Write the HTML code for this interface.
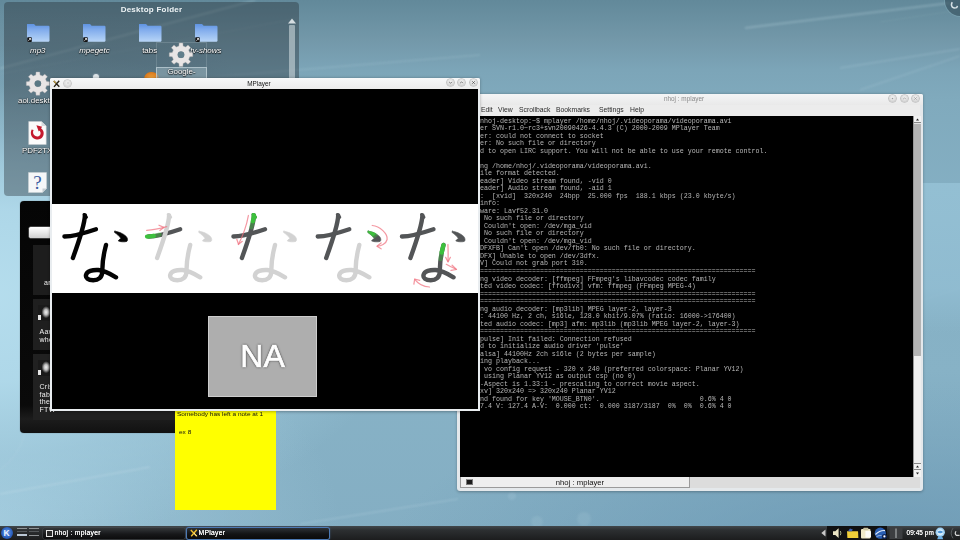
<!DOCTYPE html>
<html>
<head>
<meta charset="utf-8">
<title>KDE Desktop - MPlayer</title>
<style>
*{margin:0;padding:0;box-sizing:border-box;}
html,body{width:960px;height:540px;overflow:hidden;}
body{font-family:"Liberation Sans",sans-serif;position:relative;
 background:
  radial-gradient(ellipse 430px 250px at -20px 295px, rgba(182,222,238,.98) 0%, rgba(178,219,236,.9) 35%, rgba(166,208,226,.5) 65%, rgba(150,192,211,0) 100%),
  radial-gradient(ellipse 360px 210px at -20px 520px, rgba(168,208,226,.85) 0%, rgba(160,201,219,.55) 45%, rgba(150,192,211,0) 100%),
  radial-gradient(ellipse 240px 80px at 0px 85px, rgba(98,136,153,.6) 0%, rgba(100,138,155,0) 100%),
  radial-gradient(ellipse 520px 200px at 900px 570px, rgba(104,150,178,0.85) 0%, rgba(110,155,182,0) 100%),
  linear-gradient(180deg,#62899a 0%,#7398a9 7.4%,#7ca5b8 13%,#80aabd 18.5%,#85b0c4 40%,#87b2c6 70%,#84aec3 100%);
}
.abs{position:absolute;}
/* ---------- desktop folder ---------- */
#folder{left:4px;top:2px;width:295px;height:194px;border-radius:4px;background:rgba(30,37,42,0.36);}
#folder .title{left:0;width:295px;top:3px;text-align:center;color:#eef3f5;font-weight:bold;font-size:8px;letter-spacing:.25px;}
.lbl{color:#fff;font-size:7px;line-height:8px;text-align:center;width:56px;white-space:nowrap;text-shadow:0 0 1.5px #000,0 1px 1px rgba(0,0,0,.8);}
.lbl span{display:inline-block;transform:scaleX(1.13);}
.it{font-style:italic;}
.av{width:13px;height:16px;background:radial-gradient(ellipse 4.5px 6px at 62% 45%,#f2f2f2 0%,#bdbdbd 45%,#555 80%,#1a1a1a 100%),#1a1a1a;box-shadow:inset 2.5px -5px 0 -1px rgba(235,235,235,.0);}
.av:after{content:'';position:absolute;left:0;top:10px;width:2.5px;height:5px;background:#e6e6e6;}
.mbt{color:#f0f0f0;font-size:7px;line-height:7.6px;white-space:nowrap;letter-spacing:.3px;}
/* ---------- windows ---------- */
#mp{left:50px;top:78px;width:430px;height:333px;background:#e9edf0;border-radius:2px 2px 0 0;box-shadow:0 .5px 3px rgba(0,0,0,.3);}
#mp .tb{left:0;top:0;width:430px;height:11px;background:linear-gradient(#f7f8f9,#ececec);border-radius:2px 2px 0 0;}
#mp .vid{left:2px;top:11px;width:426px;height:320px;background:#000;overflow:hidden;}
.wtitle{font-size:6.4px;line-height:7px;color:#151515;text-align:center;white-space:nowrap;}
.btn{width:7px;height:7px;border-radius:50%;background:radial-gradient(circle at 50% 38%,#f4f4f4 0%,#dedede 50%,#bcbcbc 100%);box-shadow:0 0 0 .6px #a9a9a9;}
.btn svg{width:7px;height:7px;}
#term{left:457px;top:93.7px;width:466px;height:397.3px;background:#e4e8eb;border-radius:2px 2px 3px 3px;box-shadow:0 .5px 3px rgba(0,0,0,.28);}
#term .tb{left:0;top:0;width:466px;height:11.3px;background:linear-gradient(#f4f5f6,#e9e9e9);border-radius:2px 2px 0 0;}
#term .menu{left:3px;top:11.3px;width:460px;height:11px;background:#ececec;font-size:6.3px;line-height:8px;color:#2a2a2a;}
#term .menu span{position:absolute;top:1.5px;display:inline-block;transform-origin:0 50%;transform:scaleX(1.08);white-space:nowrap;}
#term .scr{left:3px;top:22.3px;width:453px;height:361px;background:#000;overflow:hidden;}
#term pre{font-family:"Liberation Mono",monospace;font-size:6.667px;line-height:7.52px;color:#b6b6b6;position:absolute;left:0;top:1.7px;white-space:pre;filter:blur(.3px);}
.lbl,.menu,.tl,.wtitle,.mbt,.nt,.title{filter:blur(.25px);}
/* ---------- taskbar ---------- */
#bar{left:0;top:526px;width:960px;height:14px;background:linear-gradient(#41474b 0%,#2c2f31 30%,#1c1d1e 100%);}
.task{top:1.5px;height:11px;border-radius:2px;}
.tl{color:#fff;font-size:6.8px;line-height:8px;white-space:nowrap;letter-spacing:.25px;text-shadow:0 0 .6px #fff;}
</style>
</head>
<body>

<!-- wallpaper streaks -->
<svg class="abs" style="left:0;top:0;filter:blur(.9px)" width="960" height="540" viewBox="0 0 960 540" fill="none">
  <path d="M0,68.5 L256,0" stroke="#cfe6ef" stroke-width="2" opacity=".22"/>
  <path d="M0,74 L300,18" stroke="#cfe6ef" stroke-width=".8" opacity=".14"/>
  <path d="M200,78 L480,55" stroke="#d5eaf2" stroke-width="1.4" opacity=".16"/>
  <path d="M745,28 L950,3" stroke="#cfe6ef" stroke-width="2" opacity=".26"/>
  <path d="M880,22 L960,10" stroke="#cfe6ef" stroke-width=".8" opacity=".12"/>
  <path d="M840,68 L960,49" stroke="#cfe6ef" stroke-width="1.6" opacity=".2"/>
  <path d="M860,90 L960,56" stroke="#cfe6ef" stroke-width="1.6" opacity=".18"/>
  <path d="M0,494 L150,467" stroke="#e2f2f8" stroke-width="1.4" opacity=".22"/>
  <path d="M0,470 Q40,440 20,380" stroke="#e2f2f8" stroke-width="1" opacity=".14"/>
  <path d="M923,300 L960,288" stroke="#cfe6ef" stroke-width="1" opacity=".15"/>
  <path d="M300,524 L458,499" stroke="#d8ecf4" stroke-width="1.6" opacity=".2"/>
  <circle cx="537" cy="522" r="6" fill="#cfe6ef" opacity=".12"/><circle cx="512" cy="496" r="4" fill="#cfe6ef" opacity=".14"/>
  <circle cx="584" cy="519" r="7" fill="#cfe6ef" opacity=".12"/>
  <circle cx="606" cy="443" r="5" fill="#cfe6ef" opacity=".10"/>
</svg>
<div class="abs" style="left:915px;top:183px;width:45px;height:150px;background:linear-gradient(180deg,rgba(150,194,214,.85) 0%,rgba(146,190,211,.8) 70%,rgba(140,184,206,0) 100%);"></div>
<!-- cashew -->
<div class="abs" style="left:944.5px;top:-15.5px;width:31px;height:31px;border-radius:50%;background:rgba(50,76,90,.6);box-shadow:0 0 0 1px rgba(140,185,198,.35);"></div>
<svg class="abs" style="left:948px;top:1px" width="12" height="10" viewBox="0 0 12 10"><path d="M4.2,1.2 Q2.6,4.2 4.4,6.2 Q6.2,7.6 8.6,6.6 L9.6,5" stroke="#e4eef2" stroke-width="1.5" fill="none" opacity=".9"/></svg>

<!-- Desktop folder plasmoid -->
<div id="folder" class="abs">
  <div class="title abs">Desktop Folder</div>
  <div class="abs" style="left:22.5px;top:21.9px;width:23px;height:17.8px;background:linear-gradient(180deg,#5f93e2 0%,#7fabec 30%,#b9d6f7 100%);clip-path:polygon(0 .8px,.8px 0,7.2px 0,8.4px .8px,9px 1.9px,22.2px 1.9px,23px 2.7px,23px 17px,22.2px 17.8px,.8px 17.8px,0 17px);"></div><svg class="abs" style="left:21.5px;top:21.5px" width="25" height="19" viewBox="0 0 25 19"><rect x="1.2" y="13.2" width="4.6" height="4.8" rx=".8" fill="#111"/><path d="M2.3,16.8 L4.6,14.6 M3.1,14.5 L4.7,14.5 L4.7,16.1" stroke="#fff" stroke-width=".8" fill="none"/></svg>
  <div class="lbl abs it" style="left:6px;top:45.1px;"><span>mp3</span></div>
  <div class="abs" style="left:78.5px;top:21.9px;width:23px;height:17.8px;background:linear-gradient(180deg,#5f93e2 0%,#7fabec 30%,#b9d6f7 100%);clip-path:polygon(0 .8px,.8px 0,7.2px 0,8.4px .8px,9px 1.9px,22.2px 1.9px,23px 2.7px,23px 17px,22.2px 17.8px,.8px 17.8px,0 17px);"></div><svg class="abs" style="left:77.5px;top:21.5px" width="25" height="19" viewBox="0 0 25 19"><rect x="1.2" y="13.2" width="4.6" height="4.8" rx=".8" fill="#111"/><path d="M2.3,16.8 L4.6,14.6 M3.1,14.5 L4.7,14.5 L4.7,16.1" stroke="#fff" stroke-width=".8" fill="none"/></svg>
  <div class="lbl abs it" style="left:62px;top:45.1px;"><span>mpegetc</span></div>
  <div class="abs" style="left:134.5px;top:21.9px;width:23px;height:17.8px;background:linear-gradient(180deg,#5f93e2 0%,#7fabec 30%,#b9d6f7 100%);clip-path:polygon(0 .8px,.8px 0,7.2px 0,8.4px .8px,9px 1.9px,22.2px 1.9px,23px 2.7px,23px 17px,22.2px 17.8px,.8px 17.8px,0 17px);"></div>
  <div class="lbl abs" style="left:118px;top:45.1px;"><span>tabs</span></div>
  <div class="abs" style="left:190.5px;top:21.9px;width:23px;height:17.8px;background:linear-gradient(180deg,#5f93e2 0%,#7fabec 30%,#b9d6f7 100%);clip-path:polygon(0 .8px,.8px 0,7.2px 0,8.4px .8px,9px 1.9px,22.2px 1.9px,23px 2.7px,23px 17px,22.2px 17.8px,.8px 17.8px,0 17px);"></div><svg class="abs" style="left:189.5px;top:21.5px" width="25" height="19" viewBox="0 0 25 19"><rect x="1.2" y="13.2" width="4.6" height="4.8" rx=".8" fill="#111"/><path d="M2.3,16.8 L4.6,14.6 M3.1,14.5 L4.7,14.5 L4.7,16.1" stroke="#fff" stroke-width=".8" fill="none"/></svg>
  <div class="lbl abs it" style="left:174px;top:45.1px;"><span>tv-shows</span></div>
  <div class="abs" style="left:89px;top:71.5px;width:6px;height:6px;border-radius:50%;background:#dfe6ea;box-shadow:0 0 0 1px #6c8290;"></div>
  <div class="abs" style="left:139.5px;top:70px;width:15px;height:10px;border-radius:7px 7px 0 0;background:radial-gradient(circle at 50% 80%,#f7b24a,#d9791c 70%,#9b4e12);"></div>
  <svg class="abs" style="left:0;top:0" width="295" height="194" viewBox="4 2 295 194"><path d="M35.82,74.95 L36.07,72.04 L39.73,72.04 L39.98,74.95 L42.55,76.01 L44.78,74.13 L47.37,76.72 L45.49,78.95 L46.55,81.52 L49.46,81.77 L49.46,85.43 L46.55,85.68 L45.49,88.25 L47.37,90.48 L44.78,93.07 L42.55,91.19 L39.98,92.25 L39.73,95.16 L36.07,95.16 L35.82,92.25 L33.25,91.19 L31.02,93.07 L28.43,90.48 L30.31,88.25 L29.25,85.68 L26.34,85.43 L26.34,81.77 L29.25,81.52 L30.31,78.95 L28.43,76.72 L31.02,74.13 L33.25,76.01Z M34.70,83.60 a3.20,3.20 0 1,0 6.40,0 a3.20,3.20 0 1,0 -6.40,0Z" fill="#e8e5e5" fill-rule="evenodd" stroke="#b9b4b5" stroke-width=".4"/><circle cx="37.9" cy="83.6" r="3.2" fill="#5a7884"/></svg>
  <div class="lbl abs" style="left:13.5px;top:94.5px;text-align:left;width:40px;overflow:hidden"><span style="transform-origin:0 50%">aoi.desktop</span></div>
  <svg class="abs" style="left:24.3px;top:119px" width="19" height="24" viewBox="0 0 19 24"><path d="M.7,.5 L13.5,.5 L18.2,5 L18.2,23.5 L.7,23.5Z" fill="#fbfbfb" stroke="#c9cdd0" stroke-width=".5"/><path d="M13.5,.5 L13.5,5 L18.2,5Z" fill="#d5d9dc"/><g transform="translate(9.3,12.2) scale(1.32) translate(-9.5,-12)"><path d="M5.2,9.2 C3.6,12.5 5.4,16.3 9,16.8 C12.8,17.3 15.3,13.8 14,10.4 C13.4,8.9 12.3,8 11.2,7.6 L10.4,9.6 C12.2,10.5 12.4,12.4 11.5,13.5 C10.3,15 8.1,14.7 7.1,13.4 C6.2,12.2 6,10.8 6.7,9.5Z" fill="#c41a2e"/><path d="M8.8,5.9 L13.2,7.2 L10.6,10.8Z" fill="#c41a2e"/></g></svg>
  <div class="lbl abs" style="left:18.3px;top:145.3px;text-align:left;width:40px;overflow:hidden"><span style="transform-origin:0 50%">PDF2TXT.d</span></div>
  <svg class="abs" style="left:24.3px;top:170px" width="19" height="21" viewBox="0 0 19 21"><path d="M.5,.5 L18.5,.5 L18.5,16.5 L14.5,20.5 L.5,20.5Z" fill="#f6f7f8" stroke="#cdd3d6" stroke-width=".5"/><path d="M18.5,16.5 L14.5,16.5 L14.5,20.5Z" fill="#c5cdd2"/><text x="9.4" y="17.2" font-family="Liberation Serif" font-size="19" fill="#3b5ba0" text-anchor="middle">?</text></svg>
  <div class="abs" style="left:285px;top:23px;width:6px;height:171px;background:rgba(215,225,230,.55);border-radius:1px;"></div>
  <svg class="abs" style="left:284px;top:16px" width="8" height="6"><path d="M0,5.5 L4,0.5 L8,5.5Z" fill="#d5dde1"/></svg>
  <div class="abs" style="left:152px;top:39.5px;width:51px;height:37px;border:.6px solid rgba(200,215,222,.2);"></div>
  <div class="abs" style="left:152px;top:64.5px;width:51px;height:12px;background:rgba(150,175,186,.55);border:.6px solid rgba(205,220,226,.6);"></div>
  <svg class="abs" style="left:0;top:0" width="295" height="194" viewBox="4 2 295 194"><path d="M178.90,45.95 L179.14,42.95 L182.86,42.95 L183.10,45.95 L185.70,47.03 L187.99,45.07 L190.63,47.71 L188.67,50.00 L189.75,52.60 L192.75,52.84 L192.75,56.56 L189.75,56.80 L188.67,59.40 L190.63,61.69 L187.99,64.33 L185.70,62.37 L183.10,63.45 L182.86,66.45 L179.14,66.45 L178.90,63.45 L176.30,62.37 L174.01,64.33 L171.37,61.69 L173.33,59.40 L172.25,56.80 L169.25,56.56 L169.25,52.84 L172.25,52.60 L173.33,50.00 L171.37,47.71 L174.01,45.07 L176.30,47.03Z M177.80,54.70 a3.20,3.20 0 1,0 6.40,0 a3.20,3.20 0 1,0 -6.40,0Z" fill="#e8e5e5" fill-rule="evenodd" stroke="#aaa6a7" stroke-width=".4"/><circle cx="181" cy="54.7" r="3.3" fill="#607e8b"/></svg>
  <div class="lbl abs" style="left:149.5px;top:65.5px;"><span>Google-</span></div>
</div>

<!-- dark microblog widget -->
<div id="mb" class="abs" style="left:20px;top:201px;width:200px;height:232px;background:linear-gradient(#050505 0%,#0a0a0a 88%,#1c1c1c 94%,#111 100%);border-radius:4px;box-shadow:0 0 1px rgba(0,0,0,.6);">
  <div class="abs" style="left:9px;top:26px;width:180px;height:11px;border-radius:1.5px;background:linear-gradient(#ffffff,#e9e9e9 50%,#cfcfcf);box-shadow:0 0 0 .5px #777;"></div>
  <div class="abs" style="left:12.5px;top:44px;width:176px;height:50px;background:#1d1d1d;"></div>
  <div class="abs" style="left:12.5px;top:98px;width:176px;height:51px;background:#1f1f1f;"></div>
  <div class="abs" style="left:12.5px;top:153px;width:176px;height:66px;background:#212121;"></div>
  <div class="abs av" style="left:18px;top:104px;"></div>
  <div class="abs av" style="left:18px;top:159px;"></div>
  <div class="abs mbt" style="left:24px;top:78px;">ar</div>
  <div class="abs mbt" style="left:19.5px;top:127px;">Aaw<br>whe</div>
  <div class="abs mbt" style="left:19.5px;top:182px;">Cris<br>fab<br>the<br>FTW</div>
</div>

<!-- sticky note -->
<div id="note" class="abs" style="left:175.3px;top:405px;width:101px;height:105px;background:#ffff00;">
  <div class="abs nt" style="left:1.5px;top:4.5px;font-size:6px;line-height:8px;color:#111;white-space:nowrap;"><span style="display:inline-block;transform-origin:0 50%;transform:scaleX(1.08)">Somebody has left a note at 1</span></div>
  <div class="abs nt" style="left:3.5px;top:22.5px;font-size:6px;line-height:8px;color:#111;white-space:nowrap;"><span style="display:inline-block;transform-origin:0 50%;transform:scaleX(1.08)">ex 8</span></div>
</div>

<!-- terminal window -->
<div id="term" class="abs">
  <div class="tb abs">
    <div class="wtitle abs" style="left:187px;top:1.8px;width:80px;color:#8a8a8a;">nhoj : mplayer</div>
    <div class="btn abs" style="left:432.1px;top:1.8px;"><svg class="abs" style="left:0;top:0" viewBox="0 0 9 9"><circle cx="4.5" cy="4.5" r="1" fill="#999"/></svg></div>
    <div class="btn abs" style="left:443.7px;top:1.8px;"><svg class="abs" style="left:0;top:0" viewBox="0 0 9 9"><path d="M2.8 5.3 L4.5 3.6 L6.2 5.3" stroke="#999" stroke-width="1" fill="none"/></svg></div>
    <div class="btn abs" style="left:455.4px;top:1.8px;"><svg class="abs" style="left:0;top:0" viewBox="0 0 9 9"><path d="M3 3 L6 6 M6 3 L3 6" stroke="#999" stroke-width="1" fill="none"/></svg></div>
  </div>
  <div class="menu abs">
    <span style="left:4px">File</span><span style="left:20.6px">Edit</span><span style="left:37.6px">View</span><span style="left:58.5px">Scrollback</span><span style="left:96.4px">Bookmarks</span><span style="left:138.6px">Settings</span><span style="left:170.4px">Help</span>
  </div>
  <div class="sb abs" style="left:456px;top:22.3px;width:7px;height:361px;background:#e4e4e4;border-left:.5px solid #999;">
    <div class="abs" style="left:0;top:0;width:7px;height:7px;background:#f2f2f2;border-bottom:.5px solid #888;"></div>
    <svg class="abs" style="left:0;top:0" width="7" height="7"><path d="M2 4.5 L3.5 2.5 L5 4.5Z" fill="#222"/></svg>
    <div class="abs" style="left:0;top:8px;width:7px;height:232px;background:#b4b4b4;"></div>
    <div class="abs" style="left:0;top:240px;width:7px;height:107px;background:#efefef;"></div>
    <div class="abs" style="left:0;top:347px;width:7px;height:7px;background:#f2f2f2;border-top:.5px solid #888;border-bottom:.5px solid #888;"></div>
    <svg class="abs" style="left:0;top:347px" width="7" height="7"><path d="M2 4.5 L3.5 2.5 L5 4.5Z" fill="#222"/></svg>
    <div class="abs" style="left:0;top:354px;width:7px;height:7px;background:#f2f2f2;"></div>
    <svg class="abs" style="left:0;top:354px" width="7" height="7"><path d="M2 2.5 L3.5 4.5 L5 2.5Z" fill="#222"/></svg>
  </div>
  <div class="tabs abs" style="left:3px;top:383.8px;width:460px;height:11px;background:#dcdcdc;">
    <div class="abs" style="left:0;top:0;width:230px;height:11px;background:#eeeeee;border:.5px solid #9a9a9a;border-top:none;"></div>
    <div class="abs" style="left:5.6px;top:1.8px;width:7.5px;height:6px;background:#1c1c1c;border:.7px solid #777;border-top:1.4px solid #9a9a9a;"></div>
    <div class="abs" style="left:0;top:2px;width:240px;text-align:center;font-size:7px;line-height:8px;color:#111;"><span style="display:inline-block;transform:scaleX(1.1)">nhoj : mplayer</span></div>
  </div>
  <div class="scr abs"><pre id="tt">nhoj@nhoj-desktop:~$ mplayer /home/nhoj/.videoporama/videoporama.avi
MPlayer SVN-r1.0~rc3+svn20090426-4.4.3 (C) 2000-2009 MPlayer Team
mplayer: could not connect to socket
mplayer: No such file or directory
Failed to open LIRC support. You will not be able to use your remote control.

Playing /home/nhoj/.videoporama/videoporama.avi.
AVI file format detected.
[aviheader] Video stream found, -vid 0
[aviheader] Audio stream found, -aid 1
VIDEO:  [xvid]  320x240  24bpp  25.000 fps  188.1 kbps (23.0 kbyte/s)
Clip info:
 Software: Lavf52.31.0
open: No such file or directory
[MGA] Couldn't open: /dev/mga_vid
open: No such file or directory
[MGA] Couldn't open: /dev/mga_vid
[VO_TDFXFB] Can't open /dev/fb0: No such file or directory.
[VO_3DFX] Unable to open /dev/3dfx.
[VO_XV] Could not grab port 310.
==========================================================================
Opening video decoder: [ffmpeg] FFmpeg's libavcodec codec family
Selected video codec: [ffodivx] vfm: ffmpeg (FFmpeg MPEG-4)
==========================================================================
==========================================================================
Opening audio decoder: [mp3lib] MPEG layer-2, layer-3
AUDIO: 44100 Hz, 2 ch, s16le, 128.0 kbit/9.07% (ratio: 16000-&gt;176400)
Selected audio codec: [mp3] afm: mp3lib (mp3lib MPEG layer-2, layer-3)
==========================================================================
AO: [pulse] Init failed: Connection refused
Failed to initialize audio driver 'pulse'
AO: [alsa] 44100Hz 2ch s16le (2 bytes per sample)
Starting playback...
VDec: vo config request - 320 x 240 (preferred colorspace: Planar YV12)
VDec: using Planar YV12 as output csp (no 0)
Movie-Aspect is 1.33:1 - prescaling to correct movie aspect.
VO: [xv] 320x240 =&gt; 320x240 Planar YV12
No bind found for key 'MOUSE_BTN0'.                         0.6% 4 0
A: 127.4 V: 127.4 A-V:  0.000 ct:  0.000 3187/3187  0%  0%  0.6% 4 0</pre></div>
</div>

<!-- MPlayer window -->
<div id="mp" class="abs">
  <div class="tb abs">
    <svg class="abs" style="left:2.5px;top:1.8px" width="8" height="8" viewBox="0 0 8 8"><path d="M.8,.9 L6.3,6.8 M6.2,.8 L1,6.9" stroke="#2a2418" stroke-width="1.4" fill="none"/><path d="M.8,.9 L3,3.3" stroke="#c8a040" stroke-width="1.2" fill="none"/></svg>
    <div class="btn abs" style="left:14.2px;top:1.8px;width:7px;height:7px;opacity:.9"><div class="abs" style="left:2.5px;top:2.5px;width:2px;height:2px;border-radius:50%;background:#cfcfcf"></div></div>
    <div class="wtitle abs" style="left:169px;top:2px;width:80px;">MPlayer</div>
    <div class="btn abs" style="left:396.9px;top:1.3px;"><svg class="abs" style="left:0;top:0" viewBox="0 0 9 9"><path d="M2.8 3.8 L4.5 5.5 L6.2 3.8" stroke="#6a6a6a" stroke-width="1.2" fill="none"/></svg></div>
    <div class="btn abs" style="left:408.2px;top:1.3px;"><svg class="abs" style="left:0;top:0" viewBox="0 0 9 9"><path d="M2.8 5.3 L4.5 3.6 L6.2 5.3" stroke="#6a6a6a" stroke-width="1.2" fill="none"/></svg></div>
    <div class="btn abs" style="left:419.5px;top:1.3px;"><svg class="abs" style="left:0;top:0" viewBox="0 0 9 9"><path d="M3 3 L6 6 M6 3 L3 6" stroke="#555" stroke-width="1.2" fill="none"/></svg></div>
  </div>
  <div class="vid abs">
    <div class="abs" style="left:0;top:115.2px;width:426px;height:89.1px;background:#fff;"></div>
    <svg class="abs" style="left:0;top:0;filter:blur(.4px)" width="426" height="320" viewBox="0 0 426 320" fill="none" stroke-linecap="round" stroke-linejoin="round"><g transform="translate(0.0,115)"><path d="M12.4,32.5 C20,32.4 34,28.6 44,25.2" stroke="#030303" stroke-width="4.3"/><path d="M32.9,11.4 C32.8,19 25.6,41 20.9,54" stroke="#030303" stroke-width="4.4"/><path d="M32.2,10.6 L34.3,13.2" stroke="#030303" stroke-width="3.2"/><path d="M62.9,27.2 C66,27.4 71.5,29.6 74.2,32.4 C75.9,34.3 75.9,36.6 74.8,37.4 C72.5,38.2 68.5,37.9 66.3,37.0 C66.6,35.9 67.8,35.2 68.9,34.6 C67.6,32.4 65,30.2 62.7,28.6 C62.2,28 62.4,27.4 62.9,27.2Z" fill="#030303" stroke="#030303" stroke-width=".6"/><path d="M54,41 C51.6,50 50.2,60 50.3,67.2 C50.4,73.6 46.2,76.2 41.2,76.2 C36,76.2 33.4,74 34,71 C34.8,67.2 40.6,65.6 46.4,66 C53,66.6 58.6,70 64,73.3" stroke="#030303" stroke-width="4.4"/></g><g transform="translate(84.2,115)"><path d="M12.4,32.5 C20,32.4 34,28.6 44,25.2" stroke="#535557" stroke-width="4.3"/><path d="M32.9,11.4 C32.8,19 25.6,41 20.9,54" stroke="#d2d2d2" stroke-width="4.4"/><path d="M32.2,10.6 L34.3,13.2" stroke="#d2d2d2" stroke-width="3.2"/><path d="M62.9,27.2 C66,27.4 71.5,29.6 74.2,32.4 C75.9,34.3 75.9,36.6 74.8,37.4 C72.5,38.2 68.5,37.9 66.3,37.0 C66.6,35.9 67.8,35.2 68.9,34.6 C67.6,32.4 65,30.2 62.7,28.6 C62.2,28 62.4,27.4 62.9,27.2Z" fill="#d2d2d2" stroke="#d2d2d2" stroke-width=".6"/><path d="M54,41 C51.6,50 50.2,60 50.3,67.2 C50.4,73.6 46.2,76.2 41.2,76.2 C36,76.2 33.4,74 34,71 C34.8,67.2 40.6,65.6 46.4,66 C53,66.6 58.6,70 64,73.3" stroke="#d2d2d2" stroke-width="4.4"/><path d="M10.8,32.6 C13,32.6 15.2,32.4 17.6,31.9" stroke="#3dc03d" stroke-width="4.3"/><path d="M17,32 C19,31.7 21,31.2 23.4,30.6" stroke="#3dc03d" stroke-width="4.3" opacity=".45"/><path d="M10.5,26.4 C16,26 24,24.4 30.5,22.6" stroke="#f0707e" stroke-width="1.25" opacity=".72"/><path d="M22.8,21.2 L27.6,23.4 L23.6,26.4" stroke="#f0707e" stroke-width="1.25" opacity=".72"/></g><g transform="translate(169.0,115)"><path d="M12.4,32.5 C20,32.4 34,28.6 44,25.2" stroke="#535557" stroke-width="4.3"/><path d="M32.9,11.4 C32.8,19 25.6,41 20.9,54" stroke="#535557" stroke-width="4.4"/><path d="M32.2,10.6 L34.3,13.2" stroke="#535557" stroke-width="3.2"/><path d="M62.9,27.2 C66,27.4 71.5,29.6 74.2,32.4 C75.9,34.3 75.9,36.6 74.8,37.4 C72.5,38.2 68.5,37.9 66.3,37.0 C66.6,35.9 67.8,35.2 68.9,34.6 C67.6,32.4 65,30.2 62.7,28.6 C62.2,28 62.4,27.4 62.9,27.2Z" fill="#d2d2d2" stroke="#d2d2d2" stroke-width=".6"/><path d="M54,41 C51.6,50 50.2,60 50.3,67.2 C50.4,73.6 46.2,76.2 41.2,76.2 C36,76.2 33.4,74 34,71 C34.8,67.2 40.6,65.6 46.4,66 C53,66.6 58.6,70 64,73.3" stroke="#d2d2d2" stroke-width="4.4"/><path d="M32.9,11.4 C32.8,13.2 32.4,15.2 31.9,17.2" stroke="#3dc03d" stroke-width="4.4"/><path d="M32.2,10.6 L34.3,13.2" stroke="#3dc03d" stroke-width="3.2"/><path d="M31.9,17.2 C31.4,19.2 30.9,21.2 30.3,23.2" stroke="#3dc03d" stroke-width="4.4" opacity=".4"/><path d="M27.4,11.5 C25.7,21 21.2,33 17.4,40.5" stroke="#f0707e" stroke-width="1.25" opacity=".72"/><path d="M15.8,35.3 L17.5,40.2 L21.3,37.3" stroke="#f0707e" stroke-width="1.25" opacity=".72"/></g><g transform="translate(253.3,115)"><path d="M12.4,32.5 C20,32.4 34,28.6 44,25.2" stroke="#535557" stroke-width="4.3"/><path d="M32.9,11.4 C32.8,19 25.6,41 20.9,54" stroke="#535557" stroke-width="4.4"/><path d="M32.2,10.6 L34.3,13.2" stroke="#535557" stroke-width="3.2"/><path d="M62.9,27.2 C66,27.4 71.5,29.6 74.2,32.4 C75.9,34.3 75.9,36.6 74.8,37.4 C72.5,38.2 68.5,37.9 66.3,37.0 C66.6,35.9 67.8,35.2 68.9,34.6 C67.6,32.4 65,30.2 62.7,28.6 C62.2,28 62.4,27.4 62.9,27.2Z" fill="#535557" stroke="#535557" stroke-width=".6"/><path d="M54,41 C51.6,50 50.2,60 50.3,67.2 C50.4,73.6 46.2,76.2 41.2,76.2 C36,76.2 33.4,74 34,71 C34.8,67.2 40.6,65.6 46.4,66 C53,66.6 58.6,70 64,73.3" stroke="#d2d2d2" stroke-width="4.4"/><path d="M62.9,27.2 C65.2,27.3 68.4,28.3 70.8,29.7 L67.6,32.4 C66.2,31.1 64.4,29.8 62.7,28.6 C62.2,28 62.4,27.4 62.9,27.2Z" fill="#3dc03d" stroke="#3dc03d" stroke-width=".6"/><path d="M70.8,29.7 L73,31.3 L69,34.4 L67.6,32.4Z" fill="#3dc03d" opacity=".4"/><path d="M67,21.5 C74.5,22 82.8,30 81.8,35.5 C80.8,40 75.3,42.2 72.2,42.2" stroke="#f0707e" stroke-width="1.25" opacity=".72"/><path d="M75.8,39 L71.6,42.2 L75.8,44.8" stroke="#f0707e" stroke-width="1.25" opacity=".72"/></g><g transform="translate(337.5,115)"><path d="M12.4,32.5 C20,32.4 34,28.6 44,25.2" stroke="#535557" stroke-width="4.3"/><path d="M32.9,11.4 C32.8,19 25.6,41 20.9,54" stroke="#535557" stroke-width="4.4"/><path d="M32.2,10.6 L34.3,13.2" stroke="#535557" stroke-width="3.2"/><path d="M62.9,27.2 C66,27.4 71.5,29.6 74.2,32.4 C75.9,34.3 75.9,36.6 74.8,37.4 C72.5,38.2 68.5,37.9 66.3,37.0 C66.6,35.9 67.8,35.2 68.9,34.6 C67.6,32.4 65,30.2 62.7,28.6 C62.2,28 62.4,27.4 62.9,27.2Z" fill="#535557" stroke="#535557" stroke-width=".6"/><path d="M54,41 C51.6,50 50.2,60 50.3,67.2 C50.4,73.6 46.2,76.2 41.2,76.2 C36,76.2 33.4,74 34,71 C34.8,67.2 40.6,65.6 46.4,66 C53,66.6 58.6,70 64,73.3" stroke="#535557" stroke-width="4.4"/><path d="M54,41 C53.3,43.6 52.7,46 52.2,48.5" stroke="#3dc03d" stroke-width="4.4"/><path d="M52.2,48.5 C51.7,51 51.3,53 51,55" stroke="#3dc03d" stroke-width="4.4" opacity=".4"/><path d="M58.4,40.5 C58.7,46 58.7,52 58.5,57.5" stroke="#f0707e" stroke-width="1.25" opacity=".72"/><path d="M56.1,53.3 L58.5,57.9 L60.9,53.3" stroke="#f0707e" stroke-width="1.25" opacity=".72"/><path d="M56.8,60.3 C60.2,62.3 63.2,63.8 66.6,65.3" stroke="#f0707e" stroke-width="1.25" opacity=".72"/><path d="M62.6,61.2 L67,65.5 L61.5,66.4" stroke="#f0707e" stroke-width="1.25" opacity=".72"/><path d="M40,83 C34,82.5 28.5,79.5 25.5,75.5" stroke="#f0707e" stroke-width="1.25" opacity=".72"/><path d="M24.4,80.2 L25.2,75 L30.2,76.4" stroke="#f0707e" stroke-width="1.25" opacity=".72"/></g></svg>
    <div class="abs" style="left:155.6px;top:227px;width:109.1px;height:81.3px;background:#aeaeae;border:1.6px solid #cdcdcd;"></div>
    <div class="abs" style="left:156px;top:247px;width:109px;height:40px;text-align:center;font-size:32px;line-height:40px;color:#fff;-webkit-text-stroke:.7px #fff;text-shadow:0 0 1.5px #333,0 0 1.5px #444,0 0 2.5px #555;letter-spacing:0px;filter:blur(.35px);">NA</div>
  </div>
</div>

<!-- taskbar -->
<div id="bar" class="abs">
  <!-- kickoff -->
  <div class="abs" style="left:1px;top:1px;width:12px;height:12px;border-radius:50%;background:radial-gradient(circle at 50% 45%,#6aa0ea 0%,#2d62c0 55%,#173a86 100%);"></div>
  <div class="abs" style="left:3.5px;top:2.5px;font-size:8.5px;line-height:9px;font-weight:bold;color:#e9f1ff;">K</div>
  <!-- pager -->
  <div class="abs" style="left:17px;top:1.5px;width:10px;height:1px;background:#8d9194;"></div>
  <div class="abs" style="left:29px;top:1.5px;width:10px;height:1px;background:#8d9194;"></div>
  <div class="abs" style="left:17px;top:4.5px;width:10px;height:1px;background:#54585b;"></div>
  <div class="abs" style="left:29px;top:4.5px;width:10px;height:1px;background:#54585b;"></div>
  <div class="abs" style="left:17px;top:8px;width:10px;height:2px;background:#b9c6d4;"></div>
  <div class="abs" style="left:29px;top:8.5px;width:10px;height:1.3px;background:#8d9194;"></div>
  <!-- tasks -->
  <div class="task abs" style="left:43px;width:142px;background:linear-gradient(#34373a,#17181a 55%,#0c0c0d);box-shadow:0 0 0 .5px #4a4e52;"></div>
  <div class="abs" style="left:46px;top:3.5px;width:7px;height:7px;border:1px solid #e6e6e6;background:#2b2b2b;"></div>
  <div class="abs tl" style="left:54.5px;top:3px;">nhoj : mplayer</div>
  <div class="task abs" style="left:187px;width:142px;background:linear-gradient(#2d3136,#121315 55%,#0a0a0b);box-shadow:0 0 0 1px #4c79b4, 0 0 2px 1px rgba(90,140,210,.5);"></div>
  <svg class="abs" style="left:190px;top:3px" width="8" height="8" viewBox="0 0 8 8"><path d="M.8,1 L6.8,7.2 M6.8,.8 L1.2,7.2" stroke="#f0c030" stroke-width="1.4" fill="none"/><path d="M4,4 L6.8,7.2" stroke="#fff8d0" stroke-width=".7"/></svg>
  <div class="abs tl" style="left:198.5px;top:3px;">MPlayer</div>
  <!-- tray -->
  <svg class="abs" style="left:818px;top:0" width="142" height="14" viewBox="818 0 142 14">
    <rect x="827" y="0" width="60" height="14" fill="#101112"/>
    <path d="M825.5,3.5 L821.3,7 L825.5,10.5Z" fill="#c9c9c9"/>
    <path d="M833,5.3 L835.3,5.3 L838.6,2.2 L838.6,12 L835.3,8.9 L833,8.9Z" fill="#e9e4c4"/><path d="M840.3,5 Q841.6,7.1 840.3,9.2" stroke="#b9c39a" stroke-width=".9" fill="none"/>
    <path d="M847,5.3 L858,5.3 L858.4,12 L847.4,12Z" fill="#f0cf39"/><path d="M848,5.3 L850,2.6 L852.8,3.6 L851.8,5.3Z" fill="#3e63b6"/>
    <rect x="861" y="3" width="9.5" height="9.6" rx="1" fill="#efe9c8"/><rect x="863.3" y="1.8" width="5" height="2.4" rx=".8" fill="#c9c2a0"/><rect x="865.4" y="5" width="5.6" height="6.4" rx=".6" fill="#fbfbf6"/>
    <circle cx="880.3" cy="7.2" r="5.6" fill="#2a5fb4"/><path d="M875.5,8.5 C878.5,5.5 882,4.3 885,4.6" stroke="#dfe9f8" stroke-width="1.1" fill="none"/><path d="M876.5,10.6 C878.5,9.6 880,9.4 881.5,9.6" stroke="#b9cdea" stroke-width=".8" fill="none"/><circle cx="884.4" cy="10.4" r="2.5" fill="#10275a"/><circle cx="884.4" cy="10.4" r="1.1" fill="#fff"/>
    <rect x="889.5" y="1.5" width="13" height="11.5" fill="#3c3e41"/><rect x="895.2" y="2.5" width="1.6" height="9.5" fill="#8a8d90"/>
    <circle cx="940.2" cy="6.3" r="4.7" fill="#9fd0f2"/><circle cx="940.2" cy="6.3" r="3" fill="#d9eefc"/><path d="M937.3,6 Q940.2,3.3 943.2,6 Q940.2,8.7 937.3,6Z" fill="#4b93d6"/><path d="M938.3,10.3 L942.1,10.3 L943.2,13.2 L937.2,13.2Z" fill="#6fb1e6"/>
    <path d="M953,2.2 Q949.3,7 953,12.3" stroke="#5c6063" stroke-width="1" fill="none"/><path d="M956,5.2 Q954.2,8 956.6,9.4 L959.6,9.4" stroke="#d9d9d9" stroke-width="1.2" fill="none"/>
  </svg>
  <div class="abs tl" style="left:906.5px;top:3.2px;font-size:6.4px;letter-spacing:.1px;">09:45 pm</div>
</div>

</body>
</html>
